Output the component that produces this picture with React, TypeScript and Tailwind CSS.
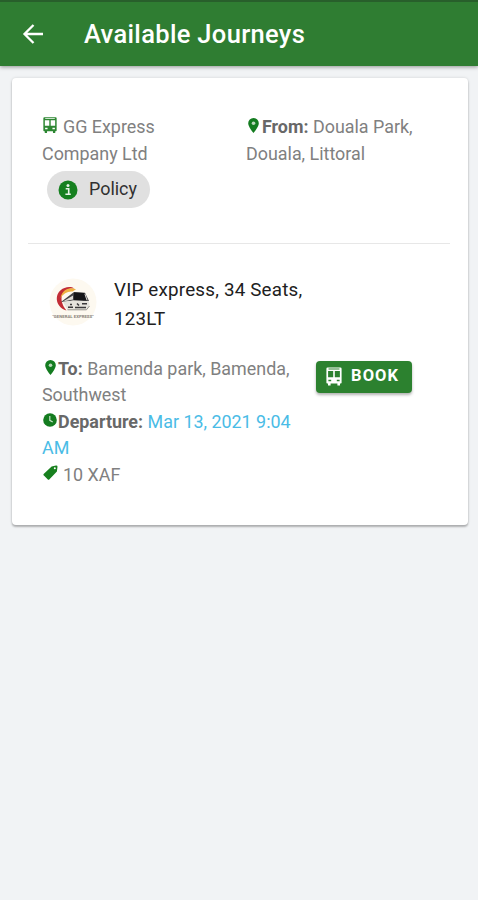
import type { ReactNode } from 'react';

type IconProps = { className?: string };

const BusIcon = ({ className }: IconProps) => (
  <svg viewBox="0 0 16 18" className={className} fill="currentColor">
    <path
      fillRule="evenodd"
      d="M1.6 0h12.8a1.2 1.2 0 0 1 1.2 1.2v14.1a.8.8 0 0 1-.8.8H14V18h-2.6v-1.9H4.6V18H2v-1.9h-.8a.8.8 0 0 1-.8-.8V1.2A1.2 1.2 0 0 1 1.6 0ZM2.5 1.1v.8h11v-.8ZM2.1 3.6v6.2h5.1V3.6ZM8.8 3.6v6.2h5.1V3.6ZM2.4 12.2v1.6h2.8v-1.6ZM10.8 12.2v1.6h2.8v-1.6Z"
    />
  </svg>
);

const PinIcon = ({ className }: IconProps) => (
  <svg viewBox="0 0 11 15" className={className}>
    <path fill="currentColor" d="M5.5 0A5.3 5.3 0 0 0 .2 5.3C.2 9.1 5.5 15 5.5 15s5.3-5.9 5.3-9.7A5.3 5.3 0 0 0 5.5 0Z" />
    <circle cx="5.5" cy="5.2" r="1.8" fill="#b9d8ba" />
  </svg>
);

const ClockIcon = ({ className }: IconProps) => (
  <svg viewBox="0 0 14 14" className={className}>
    <circle cx="7" cy="7" r="6.8" fill="currentColor" />
    <path d="M6.8 3v4.3l2.9 1.8" fill="none" stroke="#c6e2c7" strokeWidth="1.2" />
  </svg>
);

const TagIcon = ({ className }: IconProps) => (
  <svg viewBox="0 0 15 15" className={className}>
    <path fill="currentColor" d="M8.6 1.4 13 .5a1.3 1.3 0 0 1 1.5 1.3l-.6 4.6-7.4 7.9a1.3 1.3 0 0 1-1.9 0L.9 10.6a1.3 1.3 0 0 1 0-1.9Z" />
    <circle cx="11.8" cy="3.3" r="1" fill="#fff" />
  </svg>
);

const InfoIcon = ({ className }: IconProps) => (
  <svg viewBox="0 0 20 20" className={className}>
    <circle cx="10" cy="10" r="9.5" fill="currentColor" />
    <circle cx="10" cy="5.5" r="1.5" fill="#e8f3e8" />
    <path d="M7.7 8.8h3v5.1M7.4 14.2h5.4" fill="none" stroke="#e8f3e8" strokeWidth="1.6" />
  </svg>
);

const CompanyLogo = () => (
  <svg viewBox="0 0 48 48" className="block size-12">
    <circle cx="24" cy="24" r="23.5" fill="#fdf9f0" />
    <path d="M17.5 32.5C5.5 29 4.5 14 15.5 10 19 8.6 23 8.8 25 10.5 14 9.5 7.5 20 17.5 32.5Z" fill="#c22c35" />
    <path d="M11.5 20C13 12 20 8.3 27 11.3L23.5 13.5C18.5 13 14.5 15.5 11.5 20Z" fill="#efb243" />
    <path d="M12 24 25 14l11 .8 4 8.2-14.5-.5Z" fill="#424144" />
    <path d="m14 23.5 10-6v4Z" fill="#dedbd6" />
    <path d="m25 14.5 10 .6 2.8 7.4-12.8-.3Z" fill="#151518" />
    <path d="m36 16.2 2 6" stroke="#edeae4" strokeWidth=".9" />
    <path d="m14 24 10-1.5 16 .8.5 5.2-3.5 3.5H18.5Z" fill="#e6e3dd" />
    <path d="M19 29.3h5M26 29.5h11M21 26.5h2M28 25.5l2 2M33 25.7h5" stroke="#3b393b" strokeWidth="1.5" />
    <path d="M18.5 31.8h19l3-3.8" fill="none" stroke="#85817b" strokeWidth=".8" />
    <text x="3.5" y="40" textLength="41" lengthAdjust="spacingAndGlyphs" fontSize="4" fontWeight="700" fill="#8a847b">
      "GENERAL EXPRESS"
    </text>
  </svg>
);

const Label = ({ children }: { children: ReactNode }) => (
  <span className="font-bold text-[#686868]">{children}</span>
);

export default function App() {
  return (
    <div className="min-h-screen bg-[#f1f3f5] font-['Roboto',sans-serif] text-[17.9px] leading-[26.5px] text-[#808080]">
      <header className="relative flex h-[66px] items-center border-t-2 border-[#285f2b] bg-[#2f7d32] pl-[22px] text-white shadow-[0_1px_4px_rgba(0,0,0,0.4)]">
        <button aria-label="Back">
          <svg viewBox="0 0 22 22" className="block size-[22px]" fill="none" stroke="currentColor" strokeWidth="2.3">
            <path d="M21 11H2.5M11.5 2 2.5 11l9 9" />
          </svg>
        </button>
        <h1 className="ml-10 text-[25.5px] leading-8 font-medium tracking-[0.33px]">Available Journeys</h1>
      </header>

      <main className="pt-3 pr-[10px] pl-3">
        <section className="h-[447px] rounded-[4px] bg-white pt-9 shadow-[0_2px_2px_rgba(0,0,0,0.25),0_0_3px_rgba(0,0,0,0.14)]">
          {/* Company and origin */}
          <div className="flex pl-[30px]">
            <div className="w-[204px]">
              <p className="w-[140px]">
                <BusIcon className="mr-[6px] ml-[1px] inline-block h-4 w-[14px] align-[0px] text-[#2d8732]" />
                GG Express Company Ltd
              </p>
              <button className="mt-[4px] ml-[5px] flex h-[37px] w-[103px] items-center rounded-full bg-[#e0e0e0] pl-[11px] text-[#303030]">
                <InfoIcon className="mr-[11px] size-5 text-[#168020]" />
                Policy
              </button>
            </div>
            <p className="w-[190px]">
              <PinIcon className="mr-[3px] ml-[2px] inline-block h-[15px] w-[11px] align-[0px] text-[#147c20]" />
              <Label>From:</Label> Douala Park, Douala, Littoral
            </p>
          </div>

          <hr className="mr-[18px] ml-4 mt-[35px] border-[#e7e7e7]" />

          {/* Vehicle */}
          <div className="mt-[32px] flex pl-[37px]">
            <div className="mt-[2px]">
              <CompanyLogo />
            </div>
            <h2 className="ml-[17px] w-[210px] text-[18.8px] leading-[28.5px] tracking-[0.2px] text-[#202020]">
              VIP express, 34 Seats, 123LT
            </h2>
          </div>

          {/* Trip details */}
          <div className="mt-[22.5px] flex pl-[30px]">
            <div className="w-[274px]">
              <p className="w-[262px]">
                <PinIcon className="mr-[2px] ml-[3px] inline-block h-[15px] w-[11px] align-[0px] text-[#147c20]" />
                <Label>To:</Label> Bamenda park, Bamenda, Southwest
              </p>
              <p className="w-[262px]">
                <ClockIcon className="mr-[1px] ml-[1px] inline-block size-[14px] align-[1px] text-[#147c20]" />
                <Label>Departure:</Label> <span className="text-[#4abce6]">Mar 13, 2021 9:04 AM</span>
              </p>
              <p>
                <TagIcon className="mr-[5px] ml-[1px] inline-block size-[15px] align-[1px] text-[#18801f]" />
                10 XAF
              </p>
            </div>
            <button className="mt-[5px] flex h-8 w-[96px] items-center rounded-[4px] bg-[#2c812f] pl-[10px] text-[16.5px] font-bold tracking-[1.1px] text-white shadow-[0_2px_3px_rgba(0,0,0,0.3)]">
              <BusIcon className="mr-[9px] h-[19px] w-4 shrink-0" />
              BOOK
            </button>
          </div>
        </section>
      </main>
    </div>
  );
}
